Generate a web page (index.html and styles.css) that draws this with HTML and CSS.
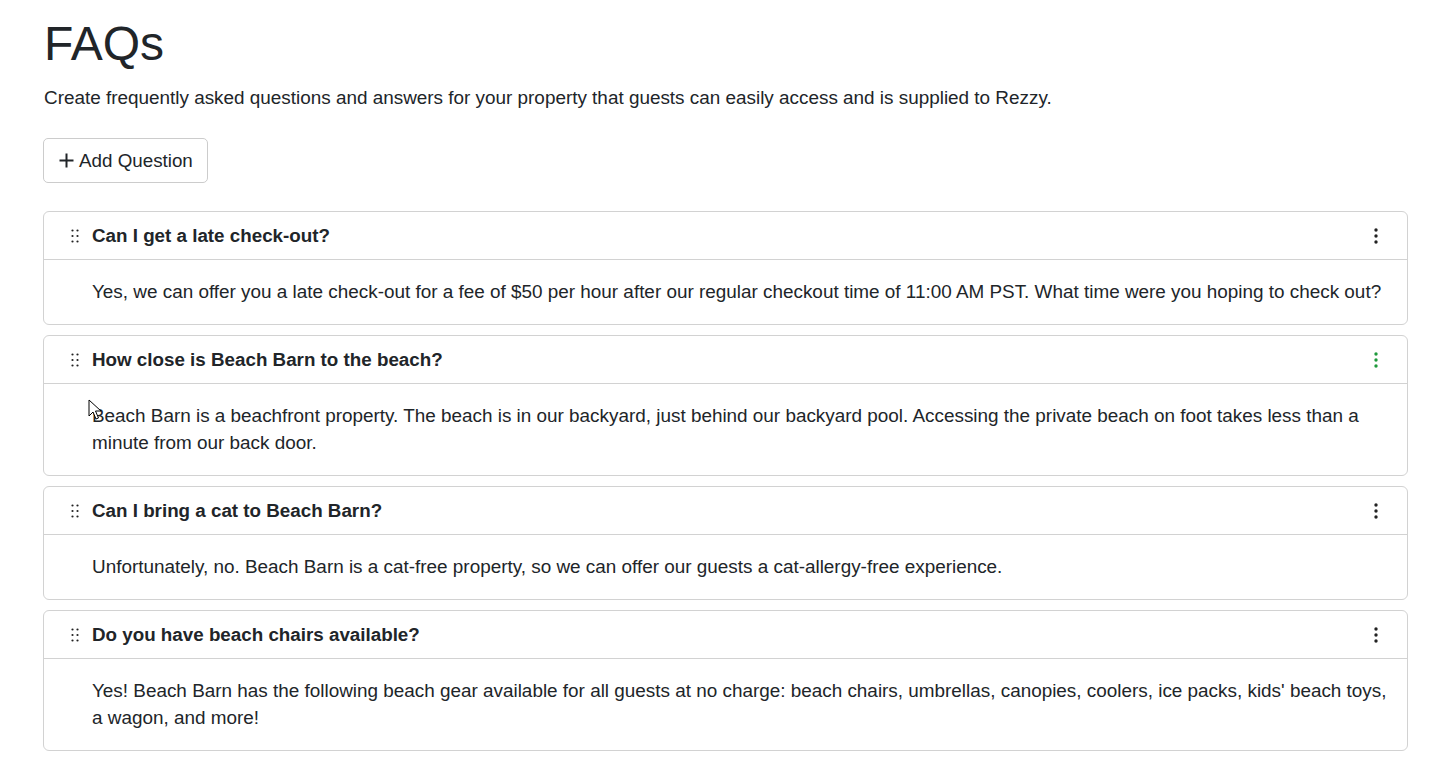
FILE: index.html
```html
<!DOCTYPE html>
<html>
<head>
    <meta charset="utf-8">
    <title>FAQs</title>
    <link rel="stylesheet" href="styles.css">
</head>
<body>
    <div class="Page">
        <h1 class="Title">FAQs</h1>
        <p class="Intro">Create frequently asked questions and answers for your property that guests can easily access and is supplied to Rezzy.</p>

        <button class="AddButton"><svg class="Plus" width="15" height="15" viewBox="0 0 15 15"><path d="M7.5 0.5 V14.5 M0.5 7.5 H14.5"/></svg>Add Question</button>

        <div class="FaqList">

            <div class="Faq">
                <div class="FaqHead">
                    <svg class="Handle" width="8" height="14" viewBox="0 0 8 14"><circle cx="1.5" cy="1.5" r="1.1"/><circle cx="6.5" cy="1.5" r="1.1"/><circle cx="1.5" cy="7" r="1.1"/><circle cx="6.5" cy="7" r="1.1"/><circle cx="1.5" cy="12.5" r="1.1"/><circle cx="6.5" cy="12.5" r="1.1"/></svg>
                    <span class="Question">Can I get a late check-out?</span>
                    <svg class="Kebab" width="4" height="16" viewBox="0 0 4 16"><circle cx="2" cy="2" r="1.7"/><circle cx="2" cy="8" r="1.7"/><circle cx="2" cy="14" r="1.7"/></svg>
                </div>
                <div class="FaqBody">Yes, we can offer you a late check-out for a fee of $50 per hour after our regular checkout time of 11:00 AM PST. What time were you hoping to check out?</div>
            </div>

            <div class="Faq">
                <div class="FaqHead">
                    <svg class="Handle" width="8" height="14" viewBox="0 0 8 14"><circle cx="1.5" cy="1.5" r="1.1"/><circle cx="6.5" cy="1.5" r="1.1"/><circle cx="1.5" cy="7" r="1.1"/><circle cx="6.5" cy="7" r="1.1"/><circle cx="1.5" cy="12.5" r="1.1"/><circle cx="6.5" cy="12.5" r="1.1"/></svg>
                    <span class="Question">How close is Beach Barn to the beach?</span>
                    <svg class="Kebab Active" width="4" height="16" viewBox="0 0 4 16"><circle cx="2" cy="2" r="1.7"/><circle cx="2" cy="8" r="1.7"/><circle cx="2" cy="14" r="1.7"/></svg>
                </div>
                <div class="FaqBody">Beach Barn is a beachfront property. The beach is in our backyard, just behind our backyard pool. Accessing the private beach on foot takes less than a minute from our back door.</div>
                <svg class="Cursor" width="14" height="22" viewBox="0 0 14 22"><path d="M1 1 L1 17 L5 13 L8 20 L10.5 19 L7.5 12 L13 12 Z" fill="#fff" stroke="#000" stroke-width="1"/></svg>
            </div>

            <div class="Faq">
                <div class="FaqHead">
                    <svg class="Handle" width="8" height="14" viewBox="0 0 8 14"><circle cx="1.5" cy="1.5" r="1.1"/><circle cx="6.5" cy="1.5" r="1.1"/><circle cx="1.5" cy="7" r="1.1"/><circle cx="6.5" cy="7" r="1.1"/><circle cx="1.5" cy="12.5" r="1.1"/><circle cx="6.5" cy="12.5" r="1.1"/></svg>
                    <span class="Question">Can I bring a cat to Beach Barn?</span>
                    <svg class="Kebab" width="4" height="16" viewBox="0 0 4 16"><circle cx="2" cy="2" r="1.7"/><circle cx="2" cy="8" r="1.7"/><circle cx="2" cy="14" r="1.7"/></svg>
                </div>
                <div class="FaqBody">Unfortunately, no. Beach Barn is a cat-free property, so we can offer our guests a cat-allergy-free experience.</div>
            </div>

            <div class="Faq">
                <div class="FaqHead">
                    <svg class="Handle" width="8" height="14" viewBox="0 0 8 14"><circle cx="1.5" cy="1.5" r="1.1"/><circle cx="6.5" cy="1.5" r="1.1"/><circle cx="1.5" cy="7" r="1.1"/><circle cx="6.5" cy="7" r="1.1"/><circle cx="1.5" cy="12.5" r="1.1"/><circle cx="6.5" cy="12.5" r="1.1"/></svg>
                    <span class="Question">Do you have beach chairs available?</span>
                    <svg class="Kebab" width="4" height="16" viewBox="0 0 4 16"><circle cx="2" cy="2" r="1.7"/><circle cx="2" cy="8" r="1.7"/><circle cx="2" cy="14" r="1.7"/></svg>
                </div>
                <div class="FaqBody">Yes! Beach Barn has the following beach gear available for all guests at no charge: beach chairs, umbrellas, canopies, coolers, ice packs, kids' beach toys, a wagon, and more!</div>
            </div>

        </div>
    </div>
</body>
</html>
```

FILE: styles.css
```css
body {
    margin: 0;
    background: #fff;
    color: #212529;
    font-family: "Liberation Sans", Arial, sans-serif;
}

.Page {
    padding: 14px 30px 20px 43px;
}

.Title {
    margin: 0;
    font-size: 48px;
    font-weight: normal;
    line-height: 60px;
    padding-left: 1px;
}

.Intro {
    margin: 12px 0 0 1px;
    font-size: 18.9px;
    line-height: 24px;
}

.AddButton {
    margin-top: 28px;
    height: 45px;
    padding: 0 14px 0 15px;
    background: #fff;
    border: 1px solid #ccc;
    border-radius: 5px;
    font-family: inherit;
    font-size: 18.8px;
    color: #212529;
    display: flex;
    align-items: center;
}

.Plus {
    stroke: #212529;
    stroke-width: 2;
    margin-right: 5px;
}

.FaqList {
    margin-top: 28px;
    display: flex;
    flex-direction: column;
    gap: 10px;
}

.Faq {
    position: relative;
    border: 1px solid #d2d2d2;
    border-radius: 6px;
}

.FaqHead {
    display: flex;
    align-items: center;
    height: 47px;
    padding: 0 29px 0 27px;
    border-bottom: 1px solid #d2d2d2;
}

.Handle {
    fill: #222;
    margin-right: 13px;
}

.Question {
    flex: 1;
    font-weight: bold;
    font-size: 18.8px;
}

.Kebab {
    fill: #222;
}

.Kebab.Active {
    fill: #1f9a3c;
}

.FaqBody {
    padding: 18px 16px 19px 48px;
    font-size: 18.9px;
    line-height: 27px;
}

.Cursor {
    position: absolute;
    left: 44px;
    top: 63px;
}
```
